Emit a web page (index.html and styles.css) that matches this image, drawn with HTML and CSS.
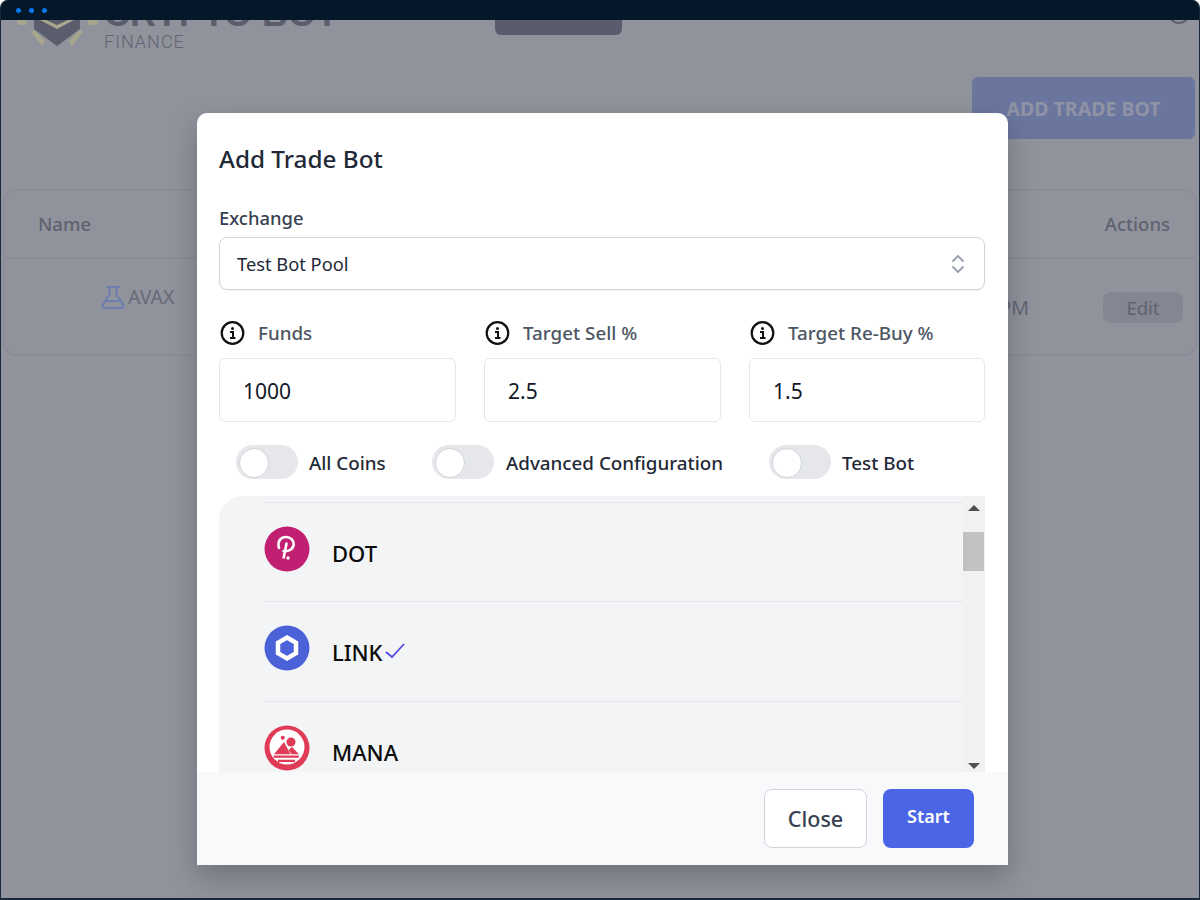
FILE: index.html
```html
<!DOCTYPE html>
<html lang="en">
<head>
    <meta charset="UTF-8">
    <meta name="viewport" content="width=device-width, initial-scale=1.0">
    <title>Add Trade Bot</title>
    <link rel="stylesheet" href="styles.css">
</head>
<body>

<div class="window">
    <div class="titlebar">
        <span class="dot"></span>
        <span class="dot"></span>
        <span class="dot"></span>
    </div>

    <!-- page behind the modal -->
    <div class="page">
        <header class="top">
            <div class="logo">
                <svg class="logo-mark" width="84" height="34" viewBox="0 0 84 34">
                    <path d="M18 0H64V16L41 33 18 16Z" fill="#5a5e6c"/>
                    <path d="M24 7H30L41 12 52 7H58L41 16Z" fill="#aaa68d"/>
                    <path d="M15 19 18 17 29 28 26 33Z" fill="#a9a68e"/>
                    <path d="M67 19 64 17 53 28 56 33Z" fill="#a9a68e"/>
                    <rect x="1" y="7" width="10" height="5" rx="2.500" fill="#a9a68e"/>
                    <rect x="72" y="7" width="10" height="5" rx="2.500" fill="#a9a68e"/>
                </svg>
                <div class="logo-text">
                    <div class="logo-name">CRYPTO BOT</div>
                    <div class="logo-sub">FINANCE</div>
                </div>
            </div>
            <div class="top-pill"></div>
            <div class="top-avatar"></div>
        </header>

        <div class="toolbar">
            <button class="add-btn">ADD TRADE BOT</button>
        </div>

        <div class="table-card">
            <div class="table-head">
                <span>Name</span>
                <span>Actions</span>
            </div>
            <div class="table-row">
                <div class="bot-name">
                    <svg width="24" height="24" viewBox="0 0 24 24" fill="none" stroke="#6d7db0" stroke-width="2" stroke-linecap="round" stroke-linejoin="round">
                        <path d="M6 2H18M8.500 2V9.500L2 19.500C1 21 2 23 4 23H20C22 23 23 21 22 19.500L15.500 9.500V2M5 16H19"/>
                    </svg>
                    <span>AVAX</span>
                </div>
                <span class="row-time">PM</span>
                <span class="edit-btn">Edit</span>
            </div>
        </div>
    </div>

    <div class="modal">
        <div class="modal-body">
            <h2 class="modal-title">Add Trade Bot</h2>

            <label class="field-label">Exchange</label>
            <div class="select">
                <span>Test Bot Pool</span>
                <svg width="20" height="24" viewBox="0 0 20 24" fill="none" stroke="#9ca3af" stroke-width="2" stroke-linecap="round" stroke-linejoin="round">
                    <path d="M5 9 10 4 15 9M5 15 10 20 15 15"/>
                </svg>
            </div>

            <div class="number-fields">
                <div class="number-field">
                    <div class="info-label">
                        <svg class="info-icon" width="26" height="26" viewBox="0 0 26 26">
                            <circle cx="13.500" cy="13" r="10.800" fill="none" stroke="#111" stroke-width="2.200"/>
                            <circle cx="13.500" cy="8.500" r="1.500" fill="#111"/>
                            <path d="M11 12H14V17.500M11 18H16.500" fill="none" stroke="#111" stroke-width="2"/>
                        </svg>
                        <span>Funds</span>
                    </div>
                    <div class="text-input">1000</div>
                </div>
                <div class="number-field">
                    <div class="info-label">
                        <svg class="info-icon" width="26" height="26" viewBox="0 0 26 26">
                            <circle cx="13.500" cy="13" r="10.800" fill="none" stroke="#111" stroke-width="2.200"/>
                            <circle cx="13.500" cy="8.500" r="1.500" fill="#111"/>
                            <path d="M11 12H14V17.500M11 18H16.500" fill="none" stroke="#111" stroke-width="2"/>
                        </svg>
                        <span>Target Sell %</span>
                    </div>
                    <div class="text-input">2.5</div>
                </div>
                <div class="number-field">
                    <div class="info-label">
                        <svg class="info-icon" width="26" height="26" viewBox="0 0 26 26">
                            <circle cx="13.500" cy="13" r="10.800" fill="none" stroke="#111" stroke-width="2.200"/>
                            <circle cx="13.500" cy="8.500" r="1.500" fill="#111"/>
                            <path d="M11 12H14V17.500M11 18H16.500" fill="none" stroke="#111" stroke-width="2"/>
                        </svg>
                        <span>Target Re-Buy %</span>
                    </div>
                    <div class="text-input">1.5</div>
                </div>
            </div>

            <div class="toggles">
                <div class="toggle-item toggle-coins"><span class="toggle"></span><span class="toggle-label">All Coins</span></div>
                <div class="toggle-item toggle-adv"><span class="toggle"></span><span class="toggle-label">Advanced Configuration</span></div>
                <div class="toggle-item"><span class="toggle"></span><span class="toggle-label">Test Bot</span></div>
            </div>

            <div class="coin-box">
                <div class="coin-list">
                    <div class="coin">
                        <svg class="coin-icon" width="46" height="46" viewBox="0 0 46 46">
                            <circle cx="23" cy="23" r="22.500" fill="#c01f72"/>
                            <path d="M15 22C13 15 17 11 22 11C27 11 30 15 29.700 18.500C29 23.500 24 26 19.500 25M22.500 17.500 19.700 31.500" fill="none" stroke="#fff" stroke-width="2.600" stroke-linecap="round"/>
                            <circle cx="24" cy="32" r="1.700" fill="#fff"/>
                        </svg>
                        <span>DOT</span>
                    </div>
                    <div class="coin">
                        <svg class="coin-icon" width="46" height="46" viewBox="0 0 46 46">
                            <circle cx="23" cy="23" r="22.500" fill="#4a61d8"/>
                            <path d="M23 12.500 32 17.700V28.300L23 33.500 14 28.300V17.700Z" fill="none" stroke="#fff" stroke-width="4.500" stroke-linejoin="miter"/>
                        </svg>
                        <span>LINK</span>
                        <svg class="coin-check" width="22" height="20" viewBox="0 0 22 20" fill="none" stroke="#4f46e5" stroke-width="1.700">
                            <path d="M2 11 8 16 20 3"/>
                        </svg>
                    </div>
                    <div class="coin">
                        <svg class="coin-icon" width="46" height="46" viewBox="0 0 46 46">
                            <circle cx="23" cy="23" r="22.500" fill="#df3b56"/>
                            <circle cx="23" cy="22" r="17.500" fill="#fff"/>
                            <circle cx="27" cy="17" r="4.500" fill="#df3b56"/>
                            <circle cx="18.700" cy="12.700" r="2" fill="#df3b56"/>
                            <path d="M10 29.300 20 17 26.500 29.300ZM27.500 29.300H35L28 22 24.500 25Z" fill="#df3b56"/>
                            <path d="M9.700 30.500H34.700V32.700H9.700ZM14 34.700H31V37H14Z" fill="#df3b56"/>
                        </svg>
                        <span>MANA</span>
                    </div>
                </div>
                <div class="scrollbar">
                    <span class="arrow-up"></span>
                    <span class="thumb"></span>
                    <span class="arrow-down"></span>
                </div>
            </div>
        </div>

        <div class="modal-footer">
            <button class="btn-close">Close</button>
            <button class="btn-start">Start</button>
        </div>
    </div>
</div>

</body>
</html>
```

FILE: styles.css
```css
* {
    box-sizing: border-box;
}

body {
    margin: 0;
    font-family: "Noto Sans", "Open Sans", sans-serif;
    background: #fff;
}

.window {
    position: relative;
    width: 1200px;
    height: 900px;
    overflow: hidden;
    display: flex;
    flex-direction: column;
    background: #90929c;
    border-radius: 8px 8px 0 0;
    border-left: 1px solid #18283a;
    border-right: 1px solid #18283a;
    border-bottom: 2px solid #18283a;
}

.titlebar {
    position: relative;
    z-index: 2;
    flex: none;
    height: 20px;
    margin: 0 -1px;
    padding-left: 16px;
    display: flex;
    align-items: center;
    gap: 8px;
    background: #051829;
}

.dot {
    width: 5px;
    height: 5px;
    border-radius: 50%;
    background: #0a78ee;
}

/* page behind the modal */
.page {
    flex: 1;
    padding: 0 2px;
    overflow: hidden;
}

.top {
    display: flex;
    align-items: flex-start;
    height: 77px;
    margin-top: -20px;
}

.logo {
    display: flex;
    width: 492px;
    padding-left: 13px;
}

.logo-mark {
    flex: none;
    margin-top: 13px;
}

.logo-text {
    margin-left: 4px;
    padding-top: 1px;
}

.logo-name {
    height: 33px;
    font-family: "Liberation Sans", sans-serif;
    font-size: 36px;
    font-weight: 700;
    line-height: 26px;
    white-space: nowrap;
    color: #5a5e6c;
}

.logo-sub {
    font-family: Roboto, sans-serif;
    font-size: 18px;
    font-weight: 300;
    line-height: 16px;
    letter-spacing: 1px;
    color: #636672;
}

.top-pill {
    width: 127px;
    height: 35px;
    border-radius: 6px;
    background: #595c6c;
}

.top-avatar {
    width: 22px;
    height: 22px;
    margin: 2px 0 0 546px;
    border: 2px solid #5f626f;
    border-radius: 50%;
}

.toolbar {
    display: flex;
    justify-content: flex-end;
    height: 112px;
    padding-right: 2px;
}

.add-btn {
    width: 223px;
    height: 62px;
    border: 0;
    border-radius: 6px;
    background: #6b769e;
    color: #8f93a5;
    font-family: inherit;
    font-size: 19.500px;
    font-weight: 700;
}

.table-card {
    height: 167px;
    border: 2px solid #8a8c97;
    border-radius: 12px;
}

.table-head {
    display: flex;
    justify-content: space-between;
    align-items: center;
    height: 68px;
    padding: 0 25px 2px 33px;
    border-bottom: 2px solid #888a95;
    font-size: 18.500px;
    font-weight: 500;
    color: #5f6270;
}

.table-row {
    display: flex;
    align-items: flex-start;
    font-size: 19.500px;
    color: #636674;
}

.bot-name {
    display: flex;
    align-items: center;
    gap: 3px;
    margin: 24px 0 0 96px;
    color: #676a78;
}

.row-time {
    margin: 35px 0 0 825px;
}

.edit-btn {
    width: 80px;
    height: 31px;
    margin: 33px 12px 0 auto;
    border-radius: 8px;
    background: #848691;
    color: #5e6270;
    font-size: 18.500px;
    text-align: center;
    line-height: 31px;
}

/* modal */
.modal {
    position: absolute;
    left: 196px;
    top: 113px;
    width: 811px;
    height: 752px;
    display: flex;
    flex-direction: column;
    overflow: hidden;
    border-radius: 10px 10px 0 0;
    background: #fff;
    box-shadow: 0 12px 28px rgba(0, 0, 0, 0.22);
}

.modal-body {
    flex: 1;
    min-height: 0;
    padding: 28px 23px 0 22px;
}

.modal-title {
    margin: 0 0 29px;
    font-size: 24.300px;
    font-weight: 500;
    line-height: 36px;
    color: #1f2937;
}

.field-label {
    display: block;
    font-size: 18.400px;
    font-weight: 500;
    line-height: 24px;
    color: #374151;
}

.select {
    display: flex;
    justify-content: space-between;
    align-items: center;
    height: 53px;
    margin-top: 7px;
    padding: 0 16px 0 17px;
    border: 1px solid #d1d5db;
    border-radius: 8px;
    box-shadow: 0 1px 2px rgba(0, 0, 0, 0.05);
    font-size: 18.300px;
    color: #1f2937;
}

.number-fields {
    display: grid;
    grid-template-columns: 237px 237px 236px;
    gap: 28px;
    margin-top: 30px;
}

.info-label {
    display: flex;
    align-items: center;
    gap: 13px;
    height: 26px;
    font-size: 18.800px;
    font-weight: 500;
    color: #4b5563;
}

.info-icon {
    flex: none;
}

.text-input {
    height: 64px;
    margin-top: 12px;
    padding-left: 23px;
    border: 1px solid #e5e7eb;
    border-radius: 6px;
    font-size: 21px;
    line-height: 64px;
    color: #111827;
}

.toggles {
    display: flex;
    margin-top: 23px;
    padding-left: 17px;
    font-size: 18.800px;
    font-weight: 500;
    color: #1f2937;
}

.toggle-item {
    display: flex;
    align-items: center;
    gap: 11px;
}

.toggle-label {
    margin-top: 2px;
}

.toggle-coins {
    width: 196px;
}

.toggle-adv {
    width: 337px;
    gap: 12px;
}

.toggle {
    position: relative;
    width: 62px;
    height: 34px;
    border-radius: 17px;
    background: #e5e7eb;
}

.toggle::after {
    content: "";
    position: absolute;
    left: 3px;
    top: 3px;
    width: 28px;
    height: 28px;
    border-radius: 50%;
    background: #fff;
    border: 1px solid #d1d5db;
}

.coin-box {
    display: flex;
    height: 276px;
    margin-top: 17px;
    overflow: hidden;
    border-top-left-radius: 24px;
    background: #f3f4f6;
}

.coin-list {
    flex: 1;
    padding: 6px 0 0 45px;
}

.coin {
    display: flex;
    align-items: flex-start;
    height: 100px;
    border-top: 1px solid #e5e7eb;
    font-size: 22px;
    font-weight: 500;
    line-height: 30px;
    color: #0b0b0b;
}

.coin:first-child {
    height: 99px;
}

.coin-icon {
    flex: none;
    margin: 23px 22px 0 0;
}

.coin > span {
    margin-top: 35px;
}

.coin-check {
    margin: 39px 0 0 1px;
}

.scrollbar {
    flex: none;
    width: 22px;
    position: relative;
    background: #f1f1f1;
}

.thumb {
    position: absolute;
    left: 0;
    top: 36px;
    width: 21px;
    height: 39px;
    background: #c1c1c1;
}

.arrow-up,
.arrow-down {
    position: absolute;
    left: 5px;
    width: 0;
    height: 0;
    border-left: 6px solid transparent;
    border-right: 6px solid transparent;
}

.arrow-up {
    top: 9px;
    border-bottom: 6px solid #505050;
}

.arrow-down {
    bottom: 3px;
    border-top: 6px solid #505050;
}

.modal-footer {
    flex: none;
    display: flex;
    justify-content: flex-end;
    align-items: flex-start;
    gap: 16px;
    height: 93px;
    padding: 17px 34px 0 0;
    background: #f8f9fb;
}

.btn-close,
.btn-start {
    height: 59px;
    border-radius: 8px;
    font-family: inherit;
    font-size: 21.500px;
    font-weight: 500;
}

.btn-close {
    width: 103px;
    padding-bottom: 2px;
    border: 1px solid #d1d5db;
    background: #fff;
    color: #374151;
}

.btn-start {
    width: 91px;
    padding-bottom: 6px;
    border: 0;
    background: #4a65e5;
    color: #fff;
    font-size: 18px;
    font-weight: 600;
}
```
